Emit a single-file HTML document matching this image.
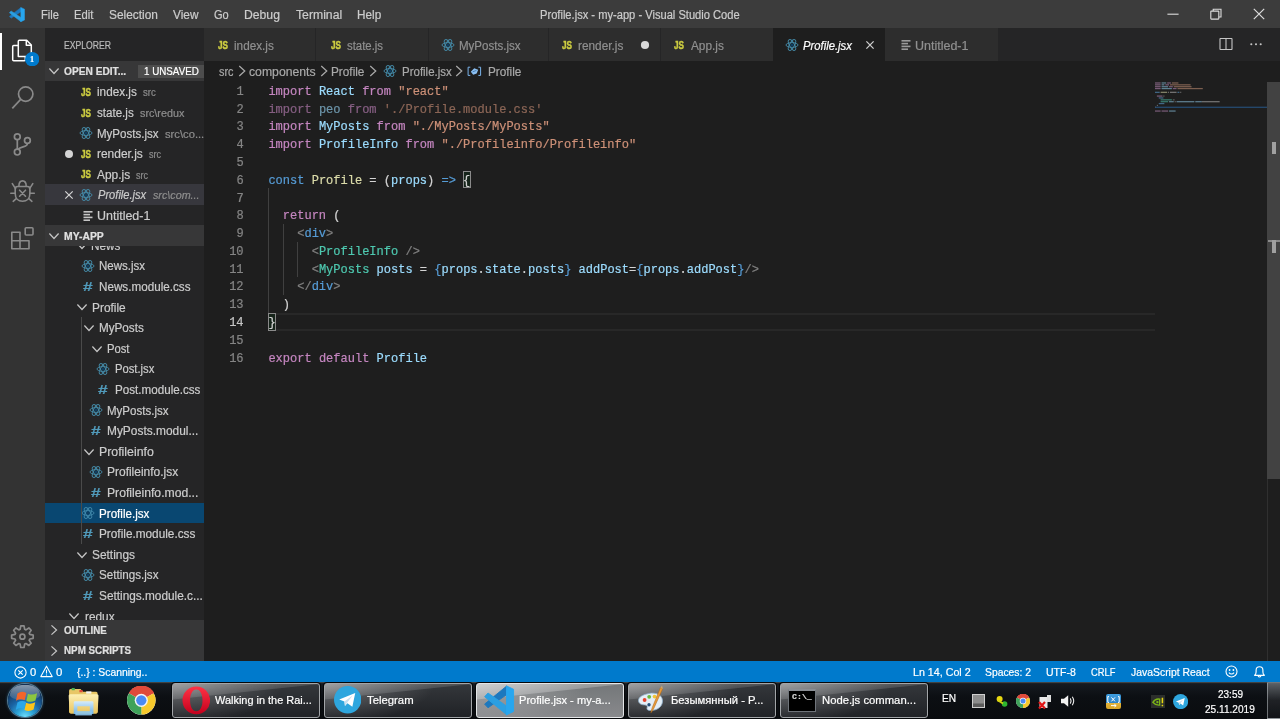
<!DOCTYPE html>
<html lang="en"><head><meta charset="utf-8"><title>Profile.jsx - my-app - Visual Studio Code</title>
<style>
*{box-sizing:border-box}
html,body{margin:0;padding:0;width:1280px;height:719px;overflow:hidden;background:#1e1e1e}
body{font-family:"Liberation Sans",sans-serif;font-size:12px;color:#ccc;position:relative;line-height:1}
#root{position:absolute;left:0;top:0;width:1280px;height:719px;overflow:hidden;will-change:transform}
.a{position:absolute;white-space:nowrap}
i.a{display:block}
.t{line-height:1;transform-origin:0 0;white-space:pre;-webkit-text-stroke:0.2px}
.mono{font-family:"Liberation Mono",monospace}
#task{left:0;top:681.6px;width:1280px;height:37.4px;background:linear-gradient(180deg,#4a4a4a 0,#3a3a3a 1px,#161a20 1.6px,#0c0f13 40%,#0a0c0f 100%)}
.ln,.cl{font-size:12.03px}
.cl{-webkit-text-stroke:0.2px}
.ln{-webkit-text-stroke:0.2px}
.cl{color:#d4d4d4}
.dim{opacity:.62}
.k{color:#c586c0}.v{color:#9cdcfe}.s{color:#ce9178}.c{color:#569cd6}.f{color:#dcdcaa}.y{color:#4ec9b0}
.g{color:#808080}
.tb{top:682.5px;height:35px;border-radius:3px;border:1px solid #a2a5a8;box-shadow:0 0 0 1px #06080a;background:radial-gradient(ellipse 75% 120% at 0% 0%,rgba(255,255,255,.30),rgba(255,255,255,0) 100%),linear-gradient(174deg,rgba(255,255,255,.32) 0%,rgba(255,255,255,.13) 31%,rgba(255,255,255,0) 33%),linear-gradient(180deg,#34373b,#202226)}
.tb.act{border-color:#e4e6e8;background:radial-gradient(ellipse 75% 120% at 0% 0%,rgba(255,255,255,.30),rgba(255,255,255,0) 100%),linear-gradient(174deg,rgba(255,255,255,.5) 0%,rgba(255,255,255,.25) 31%,rgba(255,255,255,0) 33%),linear-gradient(180deg,#747779,#88898c)}
</style></head>
<body>
<div id="root">
<header id="titlebar">
<div class="a" style="left:0.00px;top:0.00px;width:1280.00px;height:28.10px;background:#3c3c3c"></div><svg class="a" style="left:9.0px;top:6.6px" width="16.2" height="15.2" viewBox="0 0 100 100" preserveAspectRatio="none"><path d="M2 62L13 74L74 31V3Z" fill="#1c78be" stroke="#1c78be" stroke-width="3" stroke-linejoin="round"/><path d="M2 38L13 26L74 69V97Z" fill="#2b9fe2" stroke="#2b9fe2" stroke-width="3" stroke-linejoin="round"/><path d="M73 3L96 14V86L73 97Z" fill="#27a6ef" stroke="#27a6ef" stroke-width="3" stroke-linejoin="round"/></svg><span class="a t" style="left:40.50px;top:9.00px;font-size:12.0px;transform:scaleX(0.9282);color:#cccccc">File</span><span class="a t" style="left:73.75px;top:9.00px;font-size:12.0px;transform:scaleX(0.9370);color:#cccccc">Edit</span><span class="a t" style="left:109.25px;top:9.00px;font-size:12.0px;transform:scaleX(0.9909);color:#cccccc">Selection</span><span class="a t" style="left:173.00px;top:9.00px;font-size:12.0px;transform:scaleX(0.9856);color:#cccccc">View</span><span class="a t" style="left:213.75px;top:9.00px;font-size:12.0px;transform:scaleX(0.9183);color:#cccccc">Go</span><span class="a t" style="left:244.25px;top:9.00px;font-size:12.0px;transform:scaleX(1.0162);color:#cccccc">Debug</span><span class="a t" style="left:295.75px;top:9.00px;font-size:12.0px;transform:scaleX(1.0184);color:#cccccc">Terminal</span><span class="a t" style="left:356.75px;top:9.00px;font-size:12.0px;transform:scaleX(0.9798);color:#cccccc">Help</span>
<span class="a t" style="left:540.00px;top:9.00px;font-size:12.0px;transform:scaleX(0.9279);color:#cccccc">Profile.jsx - my-app - Visual Studio Code</span>
<svg class="a" style="left:1167.2px;top:8px" width="12" height="12" viewBox="0 0 12 12" ><path d="M0.4 6.2h11.2" stroke="#dcdcdc" stroke-width="1.1"/></svg><svg class="a" style="left:1209.6px;top:8.4px" width="12" height="12" viewBox="0 0 12 12" ><g fill="none" stroke="#dcdcdc" stroke-width="1.1"><rect x="0.8" y="3.1" width="8" height="8" rx="0.5"/><path d="M3.2 3.1V1.2h7.800v7.800H8.800"/></g></svg><svg class="a" style="left:1252.7px;top:8.3px" width="12" height="12" viewBox="0 0 12 12" ><path d="M0.8 0.8l10.4 10.4M11.2 0.8L0.8 11.2" stroke="#dcdcdc" stroke-width="1.2" fill="none"/></svg>
</header>
<nav id="activitybar">
<div class="a" style="left:0.00px;top:28.10px;width:45.00px;height:632.90px;background:#333333"></div><div class="a" style="left:0.00px;top:32.60px;width:2.00px;height:37.50px;background:#ffffff"></div><svg class="a" style="left:10.2px;top:37.7px" width="24" height="26" viewBox="0 0 24 26" ><g fill="none" stroke="#fff" stroke-width="1.5" stroke-linejoin="round"><path d="M8.3 18.4V3.2q0-1 1-1h7.4l4.6 4.7v10.5q0 1-1 1z"/><path d="M16.3 2.4v4.9h4.8"/><path d="M8 7.4H3.7q-1 0-1 1v13.4q0 1 1 1h10.6q1 0 1-1v-3.2"/></g></svg><svg class="a" style="left:24.9px;top:51.6px" width="14.4" height="14.4" viewBox="0 0 14.4 14.4" ><circle cx="7.2" cy="7.2" r="7.2" fill="#007acc"/></svg><span class="a t" style="left:30.30px;top:55.00px;font-size:8.8px;transform:scaleX(0.9250);color:#ffffff;font-weight:bold;font-family:'Liberation Serif',serif">1</span><svg class="a" style="left:0px;top:80px" width="45" height="35" viewBox="0 80 45 35" ><g fill="none" stroke="#8a8a8a" stroke-width="1.7"><circle cx="25.7" cy="94.1" r="7.2"/><path d="M20.7 99.3L12.3 108.3"/></g></svg><svg class="a" style="left:0px;top:128px" width="45" height="32" viewBox="0 128 45 32" ><g fill="none" stroke="#8a8a8a" stroke-width="1.7"><circle cx="17.3" cy="136.8" r="2.9"/><circle cx="17.3" cy="152.1" r="2.9"/><circle cx="27.4" cy="140.5" r="2.9"/><path d="M17.3 139.7v9.5"/><path d="M27.4 143.4C27.4 147.6 20.5 146 18.3 149.3"/></g></svg><svg class="a" style="left:0px;top:175px" width="45" height="32" viewBox="0 175 45 32" ><g fill="none" stroke="#8a8a8a" stroke-width="1.6" stroke-linecap="round"><path d="M17.6 186.5h9.9c1.6 0 2.4 .9 2.4 2.400v4.600c0 4.800-3 7.800-7.350 7.800s-7.350-3-7.350-7.800v-4.600c0-1.500 .8-2.400 2.400-2.400z"/><path d="M18.9 186.3C18.9 182.6 20.4 180.9 22.55 180.9C24.7 180.9 26.2 182.6 26.2 186.3"/><path d="M15.5 188.6L12.3 183.600M29.600 188.600L32.800 183.600M15 193.300H10.800M30.100 193.300H34.300M16.200 198.700L13.200 201.300M28.900 198.700L31.900 201.300"/><path d="M19.600 190.200L25.500 196.200M25.500 190.200L19.600 196.200"/></g></svg><svg class="a" style="left:0px;top:222px" width="45" height="32" viewBox="0 222 45 32" ><g fill="none" stroke="#8a8a8a" stroke-width="1.6" stroke-linejoin="round"><path d="M11.800 232.200H20V240.800H29V248.800H11.800Z"/><path d="M20 240.800V248.800M11.800 240.800H20"/><rect x="25.200" y="227.800" width="7.800" height="7.200" rx="1"/></g></svg><svg class="a" style="left:0px;top:620px" width="45" height="34" viewBox="0 620 45 34" ><g fill="none" stroke="#8a8a8a" stroke-width="1.7" stroke-linejoin="round"><path d="M20.77 625.92 L24.03 625.92 L24.68 629.34 L25.99 629.89 L28.87 627.93 L31.17 630.23 L29.21 633.11 L29.76 634.42 L33.18 635.07 L33.18 638.33 L29.76 638.98 L29.21 640.29 L31.17 643.17 L28.87 645.47 L25.99 643.51 L24.68 644.06 L24.03 647.48 L20.77 647.48 L20.12 644.06 L18.81 643.51 L15.93 645.47 L13.63 643.17 L15.59 640.29 L15.04 638.98 L11.62 638.33 L11.62 635.07 L15.04 634.42 L15.59 633.11 L13.63 630.23 L15.93 627.93 L18.81 629.89 L20.12 629.34Z"/><circle cx="22.4" cy="636.7" r="2.5"/></g></svg>
</nav>
<aside id="sidebar">
<div class="a" style="left:45.00px;top:28.10px;width:159.30px;height:632.90px;background:#252526"></div><span class="a t" style="left:64.00px;top:41.00px;font-size:10.2px;transform:scaleX(0.8489);color:#bbbbbb">EXPLORER</span>
<svg class="a" style="left:74.5px;top:238.6px" width="14" height="14" viewBox="-7 -7 14 14" ><path d="M-4.6 -2.53 L0 2.53 L4.6 -2.53" fill="none" stroke="#c5c5c5" stroke-width="1.25"/></svg><span class="a t" style="left:91.40px;top:240.00px;font-size:12.0px;transform:scaleX(0.9798);color:#cccccc">News</span>
<svg class="a" style="left:81.3px;top:258.9px" width="14.0" height="14.0" viewBox="-7.0 -7.0 14.0 14.0" ><g fill="none" stroke="#4489a6" stroke-width="0.95"><ellipse cx="0" cy="0" rx="6.0" ry="2.40"/><ellipse cx="0" cy="0" rx="6.0" ry="2.40" transform="rotate(60)"/><ellipse cx="0" cy="0" rx="6.0" ry="2.40" transform="rotate(120)"/></g><circle cx="0" cy="0" r="1.62" fill="#0d3f63"/></svg><span class="a t" style="left:99.40px;top:260.00px;font-size:12.0px;transform:scaleX(0.9603);color:#cccccc">News.jsx</span>
<span class="a t" style="left:83.40px;top:281.00px;font-size:12.4px;transform:scaleX(1.4000);color:#519aba;font-weight:bold">#</span><span class="a t" style="left:99.40px;top:281.00px;font-size:12.0px;transform:scaleX(0.9731);color:#cccccc">News.module.css</span>
<svg class="a" style="left:74.5px;top:300.40000000000003px" width="14" height="14" viewBox="-7 -7 14 14" ><path d="M-4.6 -2.53 L0 2.53 L4.6 -2.53" fill="none" stroke="#c5c5c5" stroke-width="1.25"/></svg><span class="a t" style="left:92.10px;top:302.00px;font-size:12.0px;transform:scaleX(0.9901);color:#cccccc">Profile</span>
<svg class="a" style="left:81.9px;top:321.00000000000006px" width="14" height="14" viewBox="-7 -7 14 14" ><path d="M-4.6 -2.53 L0 2.53 L4.6 -2.53" fill="none" stroke="#c5c5c5" stroke-width="1.25"/></svg><span class="a t" style="left:99.40px;top:322.00px;font-size:12.0px;transform:scaleX(0.9737);color:#cccccc">MyPosts</span>
<svg class="a" style="left:89.5px;top:341.6px" width="14" height="14" viewBox="-7 -7 14 14" ><path d="M-4.6 -2.53 L0 2.53 L4.6 -2.53" fill="none" stroke="#c5c5c5" stroke-width="1.25"/></svg><span class="a t" style="left:107.00px;top:343.00px;font-size:12.0px;transform:scaleX(0.9361);color:#cccccc">Post</span>
<svg class="a" style="left:96.2px;top:361.9px" width="14.0" height="14.0" viewBox="-7.0 -7.0 14.0 14.0" ><g fill="none" stroke="#4489a6" stroke-width="0.95"><ellipse cx="0" cy="0" rx="6.0" ry="2.40"/><ellipse cx="0" cy="0" rx="6.0" ry="2.40" transform="rotate(60)"/><ellipse cx="0" cy="0" rx="6.0" ry="2.40" transform="rotate(120)"/></g><circle cx="0" cy="0" r="1.62" fill="#0d3f63"/></svg><span class="a t" style="left:114.50px;top:363.00px;font-size:12.0px;transform:scaleX(0.9355);color:#cccccc">Post.jsx</span>
<span class="a t" style="left:98.30px;top:384.00px;font-size:12.4px;transform:scaleX(1.4000);color:#519aba;font-weight:bold">#</span><span class="a t" style="left:114.50px;top:384.00px;font-size:12.0px;transform:scaleX(0.9700);color:#cccccc">Post.module.css</span>
<svg class="a" style="left:88.6px;top:403.1px" width="14.0" height="14.0" viewBox="-7.0 -7.0 14.0 14.0" ><g fill="none" stroke="#4489a6" stroke-width="0.95"><ellipse cx="0" cy="0" rx="6.0" ry="2.40"/><ellipse cx="0" cy="0" rx="6.0" ry="2.40" transform="rotate(60)"/><ellipse cx="0" cy="0" rx="6.0" ry="2.40" transform="rotate(120)"/></g><circle cx="0" cy="0" r="1.62" fill="#0d3f63"/></svg><span class="a t" style="left:107.00px;top:405.00px;font-size:12.0px;transform:scaleX(0.9608);color:#cccccc">MyPosts.jsx</span>
<span class="a t" style="left:90.80px;top:425.00px;font-size:12.4px;transform:scaleX(1.4000);color:#519aba;font-weight:bold">#</span><span class="a t" style="left:107.00px;top:425.00px;font-size:12.0px;transform:scaleX(0.9924);color:#cccccc">MyPosts.modul...</span>
<svg class="a" style="left:81.9px;top:444.6px" width="14" height="14" viewBox="-7 -7 14 14" ><path d="M-4.6 -2.53 L0 2.53 L4.6 -2.53" fill="none" stroke="#c5c5c5" stroke-width="1.25"/></svg><span class="a t" style="left:99.40px;top:446.00px;font-size:12.0px;transform:scaleX(1.0263);color:#cccccc">Profileinfo</span>
<svg class="a" style="left:88.6px;top:464.9px" width="14.0" height="14.0" viewBox="-7.0 -7.0 14.0 14.0" ><g fill="none" stroke="#4489a6" stroke-width="0.95"><ellipse cx="0" cy="0" rx="6.0" ry="2.40"/><ellipse cx="0" cy="0" rx="6.0" ry="2.40" transform="rotate(60)"/><ellipse cx="0" cy="0" rx="6.0" ry="2.40" transform="rotate(120)"/></g><circle cx="0" cy="0" r="1.62" fill="#0d3f63"/></svg><span class="a t" style="left:107.00px;top:466.00px;font-size:12.0px;transform:scaleX(0.9977);color:#cccccc">Profileinfo.jsx</span>
<span class="a t" style="left:90.80px;top:487.00px;font-size:12.4px;transform:scaleX(1.4000);color:#519aba;font-weight:bold">#</span><span class="a t" style="left:107.00px;top:487.00px;font-size:12.0px;transform:scaleX(1.0144);color:#cccccc">Profileinfo.mod...</span>
<div class="a" style="left:45.00px;top:502.50px;width:159.30px;height:20.50px;background:#094771"></div><svg class="a" style="left:81.4px;top:506.1px" width="14.0" height="14.0" viewBox="-7.0 -7.0 14.0 14.0" ><g fill="none" stroke="#3f86a8" stroke-width="0.95"><ellipse cx="0" cy="0" rx="6.0" ry="2.40"/><ellipse cx="0" cy="0" rx="6.0" ry="2.40" transform="rotate(60)"/><ellipse cx="0" cy="0" rx="6.0" ry="2.40" transform="rotate(120)"/></g><circle cx="0" cy="0" r="1.62" fill="#0d3f63"/></svg><span class="a t" style="left:99.40px;top:508.00px;font-size:12.0px;transform:scaleX(0.9690);color:#ffffff">Profile.jsx</span>
<span class="a t" style="left:83.40px;top:528.00px;font-size:12.4px;transform:scaleX(1.4000);color:#519aba;font-weight:bold">#</span><span class="a t" style="left:99.40px;top:528.00px;font-size:12.0px;transform:scaleX(0.9833);color:#cccccc">Profile.module.css</span>
<svg class="a" style="left:74.6px;top:547.5999999999999px" width="14" height="14" viewBox="-7 -7 14 14" ><path d="M-4.6 -2.53 L0 2.53 L4.6 -2.53" fill="none" stroke="#c5c5c5" stroke-width="1.25"/></svg><span class="a t" style="left:92.10px;top:549.00px;font-size:12.0px;transform:scaleX(0.9917);color:#cccccc">Settings</span>
<svg class="a" style="left:81.2px;top:567.9px" width="14.0" height="14.0" viewBox="-7.0 -7.0 14.0 14.0" ><g fill="none" stroke="#4489a6" stroke-width="0.95"><ellipse cx="0" cy="0" rx="6.0" ry="2.40"/><ellipse cx="0" cy="0" rx="6.0" ry="2.40" transform="rotate(60)"/><ellipse cx="0" cy="0" rx="6.0" ry="2.40" transform="rotate(120)"/></g><circle cx="0" cy="0" r="1.62" fill="#0d3f63"/></svg><span class="a t" style="left:99.40px;top:569.00px;font-size:12.0px;transform:scaleX(0.9697);color:#cccccc">Settings.jsx</span>
<span class="a t" style="left:83.40px;top:590.00px;font-size:12.4px;transform:scaleX(1.4000);color:#519aba;font-weight:bold">#</span><span class="a t" style="left:99.40px;top:590.00px;font-size:12.0px;transform:scaleX(0.9852);color:#cccccc">Settings.module.c...</span>
<svg class="a" style="left:67.1px;top:609.4px" width="14" height="14" viewBox="-7 -7 14 14" ><path d="M-4.6 -2.53 L0 2.53 L4.6 -2.53" fill="none" stroke="#c5c5c5" stroke-width="1.25"/></svg><span class="a t" style="left:84.50px;top:611.00px;font-size:12.0px;transform:scaleX(0.9861);color:#cccccc">redux</span>
<div class="a" style="left:80.70px;top:316.70px;width:1.00px;height:227.20px;background:#4a4a4a"></div><div class="a" style="left:45.00px;top:81.40px;width:159.30px;height:144.20px;background:#252526"></div><div class="a" style="left:45.00px;top:60.90px;width:159.30px;height:20.50px;background:#373738"></div><svg class="a" style="left:47.1px;top:64.3px" width="14" height="14" viewBox="-7 -7 14 14" ><path d="M-4.6 -2.53 L0 2.53 L4.6 -2.53" fill="none" stroke="#c5c5c5" stroke-width="1.25"/></svg><span class="a t" style="left:63.80px;top:67.00px;font-size:10.2px;transform:scaleX(0.9978);color:#e0e0e0;font-weight:bold">OPEN EDIT...</span><div class="a" style="left:138.20px;top:64.70px;width:65.40px;height:13.00px;background:#4d4d4d"></div><span class="a t" style="left:144.40px;top:67.00px;font-size:10.2px;transform:scaleX(0.9623);color:#ffffff">1 UNSAVED</span>
<span class="a t" style="left:81.10px;top:88.00px;font-size:10.0px;transform:scaleX(0.8200);color:#cbcb41;font-weight:bold;-webkit-text-stroke:0.45px">JS</span><span class="a t" style="left:97.40px;top:86.00px;font-size:12.0px;transform:scaleX(0.9782);color:#cccccc">index.js</span><span class="a t" style="left:142.80px;top:87.00px;font-size:10.7px;transform:scaleX(0.8992);color:#8e8e8e">src</span>
<span class="a t" style="left:81.10px;top:109.00px;font-size:10.0px;transform:scaleX(0.8200);color:#cbcb41;font-weight:bold;-webkit-text-stroke:0.45px">JS</span><span class="a t" style="left:97.40px;top:107.00px;font-size:12.0px;transform:scaleX(0.9654);color:#cccccc">state.js</span><span class="a t" style="left:139.90px;top:108.00px;font-size:10.7px;transform:scaleX(1.0088);color:#8e8e8e">src\redux</span>
<svg class="a" style="left:79.2px;top:126.1px" width="14.0" height="14.0" viewBox="-7.0 -7.0 14.0 14.0" ><g fill="none" stroke="#4489a6" stroke-width="0.95"><ellipse cx="0" cy="0" rx="6.0" ry="2.40"/><ellipse cx="0" cy="0" rx="6.0" ry="2.40" transform="rotate(60)"/><ellipse cx="0" cy="0" rx="6.0" ry="2.40" transform="rotate(120)"/></g><circle cx="0" cy="0" r="1.62" fill="#0d3f63"/></svg><span class="a t" style="left:97.40px;top:128.00px;font-size:12.0px;transform:scaleX(0.9608);color:#cccccc">MyPosts.jsx</span><span class="a t" style="left:164.50px;top:129.00px;font-size:10.7px;transform:scaleX(1.0482);color:#8e8e8e">src\co...</span>
<svg class="a" style="left:63.2px;top:148.00000000000003px" width="12" height="12" viewBox="-6 -6 12 12" ><circle cx="0" cy="0" r="4.0" fill="#d4d4d4"/></svg><span class="a t" style="left:81.10px;top:150.00px;font-size:10.0px;transform:scaleX(0.8200);color:#cbcb41;font-weight:bold;-webkit-text-stroke:0.45px">JS</span><span class="a t" style="left:97.40px;top:148.00px;font-size:12.0px;transform:scaleX(0.9951);color:#cccccc">render.js</span><span class="a t" style="left:149.20px;top:149.00px;font-size:10.7px;transform:scaleX(0.8522);color:#8e8e8e">src</span>
<span class="a t" style="left:81.10px;top:170.00px;font-size:10.0px;transform:scaleX(0.8200);color:#cbcb41;font-weight:bold;-webkit-text-stroke:0.45px">JS</span><span class="a t" style="left:97.40px;top:169.00px;font-size:12.0px;transform:scaleX(0.9925);color:#cccccc">App.js</span><span class="a t" style="left:136.20px;top:170.00px;font-size:10.7px;transform:scaleX(0.8455);color:#8e8e8e">src</span>
<div class="a" style="left:45.00px;top:184.40px;width:159.30px;height:20.50px;background:#37373d"></div><svg class="a" style="left:63.400000000000006px;top:189.20000000000002px" width="12" height="12" viewBox="-6 -6 12 12" ><path d="M-3.7 -3.7 L3.7 3.7 M3.7 -3.7 L-3.7 3.7" fill="none" stroke="#d4d4d4" stroke-width="1.2"/></svg><svg class="a" style="left:79.2px;top:187.9px" width="14.0" height="14.0" viewBox="-7.0 -7.0 14.0 14.0" ><g fill="none" stroke="#4489a6" stroke-width="0.95"><ellipse cx="0" cy="0" rx="6.0" ry="2.40"/><ellipse cx="0" cy="0" rx="6.0" ry="2.40" transform="rotate(60)"/><ellipse cx="0" cy="0" rx="6.0" ry="2.40" transform="rotate(120)"/></g><circle cx="0" cy="0" r="1.62" fill="#0d3f63"/></svg><span class="a t" style="left:97.70px;top:189.00px;font-size:12.0px;transform:scaleX(0.9262);color:#cccccc;font-style:italic">Profile.jsx</span><span class="a t" style="left:152.60px;top:190.00px;font-size:10.7px;transform:scaleX(1.0056);color:#8e8e8e;font-style:italic">src\com...</span>
<svg class="a" style="left:82.0px;top:209.5px" width="12" height="12" viewBox="-6 -6 12 12" ><g fill="#c5c5c5"><rect x="-4.5" y="-5" width="9" height="1.6"/><rect x="-4.5" y="-2.2" width="6.5" height="1.6"/><rect x="-4.5" y="0.6" width="9" height="1.6"/><rect x="-4.5" y="3.4" width="6.5" height="1.6"/></g></svg><span class="a t" style="left:97.40px;top:210.00px;font-size:12.0px;transform:scaleX(1.0390);color:#cccccc">Untitled-1</span>
<div class="a" style="left:45.00px;top:225.40px;width:159.30px;height:20.60px;background:#373738"></div><svg class="a" style="left:47.1px;top:228.8px" width="14" height="14" viewBox="-7 -7 14 14" ><path d="M-4.6 -2.53 L0 2.53 L4.6 -2.53" fill="none" stroke="#c5c5c5" stroke-width="1.25"/></svg><span class="a t" style="left:63.80px;top:232.00px;font-size:10.2px;transform:scaleX(1.0188);color:#e0e0e0;font-weight:bold">MY-APP</span>
<div class="a" style="left:45.00px;top:619.70px;width:159.30px;height:41.40px;background:#373738"></div><svg class="a" style="left:47.2px;top:623.2px" width="14" height="14" viewBox="-7 -7 14 14" ><path d="M-2.53 -4.6 L2.53 0 L-2.53 4.6" fill="none" stroke="#c5c5c5" stroke-width="1.25"/></svg><span class="a t" style="left:63.80px;top:626.00px;font-size:10.2px;transform:scaleX(0.9574);color:#e0e0e0;font-weight:bold">OUTLINE</span><svg class="a" style="left:47.2px;top:643.6px" width="14" height="14" viewBox="-7 -7 14 14" ><path d="M-2.53 -4.6 L2.53 0 L-2.53 4.6" fill="none" stroke="#c5c5c5" stroke-width="1.25"/></svg><span class="a t" style="left:63.80px;top:646.00px;font-size:10.2px;transform:scaleX(0.9638);color:#e0e0e0;font-weight:bold">NPM SCRIPTS</span>
</aside>
<main id="editor">
<div id="tabs">
<div class="a" style="left:204.30px;top:28.10px;width:1075.70px;height:32.80px;background:#252526"></div><div class="a" style="left:204.30px;top:28.10px;width:111.00px;height:32.80px;background:#2d2d2d"></div><span class="a t" style="left:217.80px;top:41.00px;font-size:10.0px;transform:scaleX(0.8200);color:#cbcb41;font-weight:bold;-webkit-text-stroke:0.45px">JS</span><span class="a t" style="left:234.30px;top:40.00px;font-size:12.0px;transform:scaleX(0.9782);color:#909090">index.js</span>
<div class="a" style="left:316.20px;top:28.10px;width:111.60px;height:32.80px;background:#2d2d2d"></div><span class="a t" style="left:330.70px;top:41.00px;font-size:10.0px;transform:scaleX(0.8200);color:#cbcb41;font-weight:bold;-webkit-text-stroke:0.45px">JS</span><span class="a t" style="left:346.80px;top:40.00px;font-size:12.0px;transform:scaleX(0.9470);color:#909090">state.js</span>
<div class="a" style="left:428.70px;top:28.10px;width:119.30px;height:32.80px;background:#2d2d2d"></div><svg class="a" style="left:441.0px;top:38.0px" width="14.0" height="14.0" viewBox="-7.0 -7.0 14.0 14.0" ><g fill="none" stroke="#4489a6" stroke-width="0.95"><ellipse cx="0" cy="0" rx="6.0" ry="2.40"/><ellipse cx="0" cy="0" rx="6.0" ry="2.40" transform="rotate(60)"/><ellipse cx="0" cy="0" rx="6.0" ry="2.40" transform="rotate(120)"/></g><circle cx="0" cy="0" r="1.62" fill="#0d3f63"/></svg><span class="a t" style="left:459.40px;top:40.00px;font-size:12.0px;transform:scaleX(0.9608);color:#909090">MyPosts.jsx</span>
<div class="a" style="left:548.90px;top:28.10px;width:110.80px;height:32.80px;background:#2d2d2d"></div><span class="a t" style="left:561.60px;top:41.00px;font-size:10.0px;transform:scaleX(0.8200);color:#cbcb41;font-weight:bold;-webkit-text-stroke:0.45px">JS</span><span class="a t" style="left:578.10px;top:40.00px;font-size:12.0px;transform:scaleX(0.9842);color:#909090">render.js</span><svg class="a" style="left:638.5px;top:39.0px" width="12" height="12" viewBox="-6 -6 12 12" ><circle cx="0" cy="0" r="4.1" fill="#d8d8d8"/></svg>
<div class="a" style="left:660.60px;top:28.10px;width:112.40px;height:32.80px;background:#2d2d2d"></div><span class="a t" style="left:674.10px;top:41.00px;font-size:10.0px;transform:scaleX(0.8200);color:#cbcb41;font-weight:bold;-webkit-text-stroke:0.45px">JS</span><span class="a t" style="left:690.60px;top:40.00px;font-size:12.0px;transform:scaleX(0.9835);color:#909090">App.js</span>
<div class="a" style="left:773.00px;top:28.10px;width:111.60px;height:32.80px;background:#1e1e1e"></div><svg class="a" style="left:784.9px;top:38.0px" width="14.0" height="14.0" viewBox="-7.0 -7.0 14.0 14.0" ><g fill="none" stroke="#4489a6" stroke-width="0.95"><ellipse cx="0" cy="0" rx="6.0" ry="2.40"/><ellipse cx="0" cy="0" rx="6.0" ry="2.40" transform="rotate(60)"/><ellipse cx="0" cy="0" rx="6.0" ry="2.40" transform="rotate(120)"/></g><circle cx="0" cy="0" r="1.62" fill="#0d3f63"/></svg><span class="a t" style="left:803.10px;top:40.00px;font-size:12.0px;transform:scaleX(0.9375);color:#ffffff;font-style:italic">Profile.jsx</span><svg class="a" style="left:863.5px;top:39.0px" width="12" height="12" viewBox="-6 -6 12 12" ><path d="M-3.6 -3.6 L3.6 3.6 M3.6 -3.6 L-3.6 3.6" fill="none" stroke="#d0d0d0" stroke-width="1.25"/></svg>
<div class="a" style="left:885.40px;top:28.10px;width:112.40px;height:32.80px;background:#2d2d2d"></div><svg class="a" style="left:900.0px;top:39.0px" width="12" height="12" viewBox="-6 -6 12 12" ><g fill="#9a9a9a"><rect x="-4.5" y="-5" width="9" height="1.6"/><rect x="-4.5" y="-2.2" width="6.5" height="1.6"/><rect x="-4.5" y="0.6" width="9" height="1.6"/><rect x="-4.5" y="3.4" width="6.5" height="1.6"/></g></svg><span class="a t" style="left:915.30px;top:40.00px;font-size:12.0px;transform:scaleX(1.0409);color:#909090">Untitled-1</span>
<svg class="a" style="left:1219px;top:36.9px" width="14" height="14" viewBox="0 0 14 14" ><rect x="1" y="1.5" width="12" height="11" rx="0.4" fill="none" stroke="#c5c5c5" stroke-width="1.1"/><path d="M7 1.5v11" stroke="#c5c5c5" stroke-width="1.1"/></svg><svg class="a" style="left:1248.5px;top:41.5px" width="16" height="5" viewBox="0 0 16 5" ><g fill="#c5c5c5"><circle cx="2.3" cy="2.2" r="1.05"/><circle cx="7" cy="2.2" r="1.05"/><circle cx="11.7" cy="2.2" r="1.05"/></g></svg>
</div>
<div id="breadcrumbs">
<span class="a t" style="left:219.30px;top:66.00px;font-size:12.0px;transform:scaleX(0.9033);color:#a9a9a9">src</span><span class="a t" style="left:249.30px;top:66.00px;font-size:12.0px;transform:scaleX(1.0188);color:#a9a9a9">components</span><span class="a t" style="left:331.25px;top:66.00px;font-size:12.0px;transform:scaleX(0.9828);color:#a9a9a9">Profile</span><span class="a t" style="left:402.10px;top:66.00px;font-size:12.0px;transform:scaleX(0.9574);color:#a9a9a9">Profile.jsx</span><span class="a t" style="left:487.90px;top:66.00px;font-size:12.0px;transform:scaleX(0.9814);color:#a9a9a9">Profile</span><svg class="a" style="left:234.7px;top:64.4px" width="14" height="14" viewBox="-7 -7 14 14" ><path d="M-2.75 -5.0 L2.75 0 L-2.75 5.0" fill="none" stroke="#a9a9a9" stroke-width="1.25"/></svg><svg class="a" style="left:316.8px;top:64.4px" width="14" height="14" viewBox="-7 -7 14 14" ><path d="M-2.75 -5.0 L2.75 0 L-2.75 5.0" fill="none" stroke="#a9a9a9" stroke-width="1.25"/></svg><svg class="a" style="left:366.0px;top:64.4px" width="14" height="14" viewBox="-7 -7 14 14" ><path d="M-2.75 -5.0 L2.75 0 L-2.75 5.0" fill="none" stroke="#a9a9a9" stroke-width="1.25"/></svg><svg class="a" style="left:452.3px;top:64.4px" width="14" height="14" viewBox="-7 -7 14 14" ><path d="M-2.75 -5.0 L2.75 0 L-2.75 5.0" fill="none" stroke="#a9a9a9" stroke-width="1.25"/></svg><svg class="a" style="left:383.3px;top:64.2px" width="14.0" height="14.0" viewBox="-7.0 -7.0 14.0 14.0" ><g fill="none" stroke="#4489a6" stroke-width="0.95"><ellipse cx="0" cy="0" rx="6.0" ry="2.40"/><ellipse cx="0" cy="0" rx="6.0" ry="2.40" transform="rotate(60)"/><ellipse cx="0" cy="0" rx="6.0" ry="2.40" transform="rotate(120)"/></g><circle cx="0" cy="0" r="1.62" fill="#0d3f63"/></svg><svg class="a" style="left:464px;top:64px" width="20" height="14" viewBox="464 64 20 14" ><g fill="none" stroke="#7ab3ea" stroke-width="1"><path d="M470.3 67.2H468.1V75.4H470.3"/><path d="M478.400 67.2H480.600V75.400H478.400"/></g><path d="M470.800 71.800L474.200 68.200L478.200 69.800L476.700 73.600L473.200 74.700Z" fill="#8cc0f2"/><path d="M472.600 71.900L476.400 70.400" stroke="#2f6496" stroke-width=".7"/></svg>
</div>
<div id="code" class="mono">
<div class="a" style="left:268.40px;top:313.00px;width:886.60px;height:2.00px;background:#282828"></div><div class="a" style="left:268.40px;top:329.00px;width:886.60px;height:2.00px;background:#282828"></div><div class="a" style="left:462.90px;top:170.50px;width:7.8px;height:17.3px;border:1px solid #8a8a8a;background:#16241a"></div><div class="a" style="left:268.10px;top:313.30px;width:7.8px;height:17.3px;border:1px solid #8a8a8a;background:#16241a"></div>
<div class="a" style="left:268.10px;top:188.24px;width:1.00px;height:124.53px;background:#404040"></div><div class="a" style="left:282.53px;top:223.82px;width:1.00px;height:71.16px;background:#404040"></div><div class="a" style="left:296.96px;top:241.61px;width:1.00px;height:35.58px;background:#404040"></div>
<span class="a t mono ln" style="left:236.38px;top:86.00px;color:#858585">1</span><span class="a t mono cl" style="left:268.4px;top:86.00px"><span class="k">import</span> <span class="v">React</span> <span class="k">from</span> <span class="s">"react"</span></span>
<span class="a t mono ln" style="left:236.38px;top:104.00px;color:#858585">2</span><span class="a t mono cl" style="left:268.4px;top:104.00px"><span class="dim"><span class="k">import</span> <span class="v">peo</span> <span class="k">from</span> <span class="s">'./Profile.module.css'</span></span></span>
<span class="a t mono ln" style="left:236.38px;top:121.00px;color:#858585">3</span><span class="a t mono cl" style="left:268.4px;top:121.00px"><span class="k">import</span> <span class="v">MyPosts</span> <span class="k">from</span> <span class="s">"./MyPosts/MyPosts"</span></span>
<span class="a t mono ln" style="left:236.38px;top:139.00px;color:#858585">4</span><span class="a t mono cl" style="left:268.4px;top:139.00px"><span class="k">import</span> <span class="v">ProfileInfo</span> <span class="k">from</span> <span class="s">"./Profileinfo/Profileinfo"</span></span>
<span class="a t mono ln" style="left:236.38px;top:157.00px;color:#858585">5</span>
<span class="a t mono ln" style="left:236.38px;top:175.00px;color:#858585">6</span><span class="a t mono cl" style="left:268.4px;top:175.00px"><span class="c">const</span> <span class="f">Profile</span> = (<span class="v">props</span>) <span class="c">=&gt;</span> {</span>
<span class="a t mono ln" style="left:236.38px;top:193.00px;color:#858585">7</span>
<span class="a t mono ln" style="left:236.38px;top:210.00px;color:#858585">8</span><span class="a t mono cl" style="left:268.4px;top:210.00px">  <span class="k">return</span> (</span>
<span class="a t mono ln" style="left:236.38px;top:228.00px;color:#858585">9</span><span class="a t mono cl" style="left:268.4px;top:228.00px">    <span class="g">&lt;</span><span class="c">div</span><span class="g">&gt;</span></span>
<span class="a t mono ln" style="left:229.17px;top:246.00px;color:#858585">10</span><span class="a t mono cl" style="left:268.4px;top:246.00px">      <span class="g">&lt;</span><span class="y">ProfileInfo</span> <span class="g">/&gt;</span></span>
<span class="a t mono ln" style="left:229.17px;top:264.00px;color:#858585">11</span><span class="a t mono cl" style="left:268.4px;top:264.00px">      <span class="g">&lt;</span><span class="y">MyPosts</span> <span class="v">posts</span> = <span class="c">{</span><span class="v">props</span>.<span class="v">state</span>.<span class="v">posts</span><span class="c">}</span> <span class="v">addPost</span>=<span class="c">{</span><span class="v">props</span>.<span class="v">addPost</span><span class="c">}</span><span class="g">/&gt;</span></span>
<span class="a t mono ln" style="left:229.17px;top:281.00px;color:#858585">12</span><span class="a t mono cl" style="left:268.4px;top:281.00px">    <span class="g">&lt;/</span><span class="c">div</span><span class="g">&gt;</span></span>
<span class="a t mono ln" style="left:229.17px;top:299.00px;color:#858585">13</span><span class="a t mono cl" style="left:268.4px;top:299.00px">  )</span>
<span class="a t mono ln" style="left:229.17px;top:317.00px;color:#c6c6c6">14</span><span class="a t mono cl" style="left:268.4px;top:317.00px">}</span>
<span class="a t mono ln" style="left:229.17px;top:335.00px;color:#858585">15</span>
<span class="a t mono ln" style="left:229.17px;top:353.00px;color:#858585">16</span><span class="a t mono cl" style="left:268.4px;top:353.00px"><span class="k">export</span> <span class="k">default</span> <span class="v">Profile</span></span>
</div>
<div id="minimap">
<svg class="a" style="left:1155px;top:81.5px" width="112.5" height="40" viewBox="0 0 112.5 40" ><g opacity=".8"><rect x="0.00" y="0.35" width="5.62" height="1.25" fill="#8e6a8c"/><rect x="6.56" y="0.35" width="4.69" height="1.25" fill="#6f98ae"/><rect x="12.18" y="0.35" width="3.75" height="1.25" fill="#8e6a8c"/><rect x="16.87" y="0.35" width="6.56" height="1.25" fill="#94705c"/><rect x="0.00" y="2.22" width="5.62" height="1.25" fill="#8e6a8c"/><rect x="6.56" y="2.22" width="2.81" height="1.25" fill="#6f98ae"/><rect x="10.31" y="2.22" width="3.75" height="1.25" fill="#8e6a8c"/><rect x="14.99" y="2.22" width="20.61" height="1.25" fill="#94705c"/><rect x="0.00" y="4.09" width="5.62" height="1.25" fill="#8e6a8c"/><rect x="6.56" y="4.09" width="6.56" height="1.25" fill="#6f98ae"/><rect x="14.06" y="4.09" width="3.75" height="1.25" fill="#8e6a8c"/><rect x="18.74" y="4.09" width="17.80" height="1.25" fill="#94705c"/><rect x="0.00" y="5.97" width="5.62" height="1.25" fill="#8e6a8c"/><rect x="6.56" y="5.97" width="10.31" height="1.25" fill="#6f98ae"/><rect x="17.80" y="5.97" width="3.75" height="1.25" fill="#8e6a8c"/><rect x="22.49" y="5.97" width="25.30" height="1.25" fill="#94705c"/><rect x="0.00" y="9.71" width="4.69" height="1.25" fill="#4a7aa0"/><rect x="5.62" y="9.71" width="6.56" height="1.25" fill="#9c9c7c"/><rect x="13.12" y="9.71" width="0.94" height="1.25" fill="#8a8a8a"/><rect x="14.99" y="9.71" width="6.56" height="1.25" fill="#8a8a8a"/><rect x="22.49" y="9.71" width="1.87" height="1.25" fill="#4a7aa0"/><rect x="25.30" y="9.71" width="0.94" height="1.25" fill="#8a8a8a"/><rect x="1.87" y="13.45" width="5.62" height="1.25" fill="#8e6a8c"/><rect x="8.43" y="13.45" width="0.94" height="1.25" fill="#8a8a8a"/><rect x="3.75" y="15.33" width="4.69" height="1.25" fill="#4a7aa0"/><rect x="5.62" y="17.20" width="11.24" height="1.25" fill="#3f8f80"/><rect x="17.80" y="17.20" width="1.87" height="1.25" fill="#666"/><rect x="5.62" y="19.07" width="7.50" height="1.25" fill="#3f8f80"/><rect x="14.06" y="19.07" width="4.69" height="1.25" fill="#6f98ae"/><rect x="19.68" y="19.07" width="0.94" height="1.25" fill="#8a8a8a"/><rect x="21.55" y="19.07" width="17.80" height="1.25" fill="#6f98ae"/><rect x="40.29" y="19.07" width="6.56" height="1.25" fill="#6f98ae"/><rect x="46.85" y="19.07" width="17.80" height="1.25" fill="#8a8a8a"/><rect x="3.75" y="20.94" width="5.62" height="1.25" fill="#4a7aa0"/><rect x="1.87" y="22.81" width="0.94" height="1.25" fill="#8a8a8a"/><rect x="0.00" y="24.69" width="0.94" height="1.25" fill="#8a8a8a"/><rect x="0.00" y="28.43" width="5.62" height="1.25" fill="#8e6a8c"/><rect x="6.56" y="28.43" width="6.56" height="1.25" fill="#8e6a8c"/><rect x="14.06" y="28.43" width="6.56" height="1.25" fill="#6f98ae"/></g><rect x="0" y="24.64" width="112.5" height="1.3" fill="#264f78" opacity=".9"/></svg>
<div class="a" style="left:1267.30px;top:81.50px;width:12.70px;height:579.50px;background:transparent;border-left:1px solid #303030"></div><div class="a" style="left:1267.30px;top:81.50px;width:12.70px;height:397.00px;background:#424242"></div><div class="a" style="left:1272.20px;top:142.00px;width:3.60px;height:12.00px;background:#a0a0a0"></div><div class="a" style="left:1267.80px;top:239.60px;width:12.20px;height:2.60px;background:#8a8a8a"></div><div class="a" style="left:1272.20px;top:240.00px;width:3.60px;height:12.50px;background:#a0a0a0"></div>
</div>
</main>
<footer id="statusbar">
<div class="a" style="left:0.00px;top:660.90px;width:1280.00px;height:21.00px;background:#007acc"></div><svg class="a" style="left:13.9px;top:665.5px" width="13" height="13" viewBox="0 0 13 13" ><g fill="none" stroke="#fff" stroke-width="1.1"><circle cx="6.5" cy="6.5" r="5.6"/><path d="M4.3 4.3l4.4 4.4M8.7 4.3l-4.4 4.4"/></g></svg><span class="a t" style="left:30.00px;top:667.00px;font-size:11.2px;transform:scaleX(1.0000);color:#fff">0</span><svg class="a" style="left:39.6px;top:665.3px" width="13" height="13" viewBox="0 0 13 13" ><g fill="none" stroke="#fff" stroke-width="1.1" stroke-linejoin="round"><path d="M6.5 1.2L12.2 11.6H0.8z"/><path d="M6.5 4.8v3.6M6.5 9.4v1.2"/></g></svg><span class="a t" style="left:55.70px;top:667.00px;font-size:11.2px;transform:scaleX(1.0167);color:#fff">0</span><span class="a t" style="left:77.00px;top:667.00px;font-size:11.2px;transform:scaleX(0.9264);color:#fff">{..} : Scanning..</span>
<span class="a t" style="left:912.50px;top:667.00px;font-size:11.2px;transform:scaleX(0.9550);color:#fff">Ln 14, Col 2</span><span class="a t" style="left:985.00px;top:667.00px;font-size:11.2px;transform:scaleX(0.9236);color:#fff">Spaces: 2</span><span class="a t" style="left:1046.25px;top:667.00px;font-size:11.2px;transform:scaleX(0.9373);color:#fff">UTF-8</span><span class="a t" style="left:1090.50px;top:667.00px;font-size:11.2px;transform:scaleX(0.8339);color:#fff">CRLF</span><span class="a t" style="left:1130.50px;top:667.00px;font-size:11.2px;transform:scaleX(0.9303);color:#fff">JavaScript React</span><svg class="a" style="left:1224.7px;top:665.4px" width="13" height="13" viewBox="0 0 13 13" ><g fill="none" stroke="#fff" stroke-width="1.1"><circle cx="6.5" cy="6.5" r="5.5"/><path d="M3.9 7.6q2.6 2.8 5.2 0"/></g><circle cx="4.6" cy="5" r=".9" fill="#fff"/><circle cx="8.4" cy="5" r=".9" fill="#fff"/></svg><svg class="a" style="left:1252.8px;top:665.0px" width="13" height="14" viewBox="0 0 13 14" ><g fill="none" stroke="#fff" stroke-width="1.15" stroke-linejoin="round"><path d="M1.6 10.3q1.5-1 1.5-3.200V5.200q0-3.400 3.400-3.400t3.400 3.400v1.900q0 2.200 1.500 3.200z"/><path d="M5 11.200q1.500 1.700 3 0"/></g></svg>
</footer>
<footer id="taskbar">
<div id="task" class="a"></div>
<div class="a" style="left:8px;top:684.4px;width:34.4px;height:33px;border-radius:50%;background:radial-gradient(circle at 50% 100%,#6fe0ff 0%,#2fa6d8 22%,#1a64a4 46%,#153f6c 70%,#10294a 100%);box-shadow:0 0 0 1px rgba(140,190,220,.5),0 0 3px 1px rgba(60,140,200,.45)"></div><div class="a" style="left:10.4px;top:685px;width:29.6px;height:15.4px;border-radius:15px 15px 50% 50%/13px 13px 6px 6px;background:linear-gradient(180deg,rgba(255,255,255,.5),rgba(255,255,255,.1))"></div><svg class="a" style="left:15.6px;top:689.2px" width="21.6" height="22.6" viewBox="0 0 18.4 17.4" preserveAspectRatio="none"><path d="M1.2 3.4q3.6-2.200 7.600-.4l-1.400 5.600q-3.600-1.600-7.400.4z" fill="#f2652a"/><path d="M10.200 3.600q3.600 1.600 7.800-.4l-1.400 5.600q-4 2-7.800.4z" fill="#8cc63f"/><path d="M1.200 10.400q3.600-2 7.400-.4l-1.400 5.600q-3.600-1.600-7.400.4z" fill="#2aa7e8"/><path d="M8.600 10.600q3.800 1.600 7.800-.4l-1.400 5.600q-4 2-7.800.4z" fill="#fcc419"/></svg>
<svg class="a" style="left:66.7px;top:684.7px" width="33.2" height="31.8" viewBox="0 0 32 28" preserveAspectRatio="none"><defs><linearGradient id="fg" x1="0" y1="0" x2="0" y2="1"><stop offset="0" stop-color="#fdf0b4"/><stop offset="1" stop-color="#e9c35c"/></linearGradient><linearGradient id="fb" x1="0" y1="0" x2="0" y2="1"><stop offset="0" stop-color="#d6ecfb"/><stop offset="1" stop-color="#6fb2e4"/></linearGradient></defs><path d="M2 5q0-1.500 1.500-1.500h9.500l2.500 2.500h12.500q1.500 0 1.500 1.500v16q0 1.500-1.500 1.500h-24.500q-1.500 0-1.500-1.500z" fill="#e8c766"/><rect x="4.500" y="2.600" width="3" height="2" fill="#4caf50"/><rect x="12" y="4.400" width="3" height="2" fill="#e04a3a"/><rect x="18.500" y="5.600" width="5" height="2" fill="#f5f5f5"/><path d="M1.600 9.500q0-1.400 1.400-1.400h26q1.400 0 1.400 1.400l-.8 14.100q-.1 1.400-1.500 1.400h-24.200q-1.400 0-1.500-1.400z" fill="url(#fg)"/><path d="M6.500 15.500q0-1.300 1.300-1.300h16.400q1.300 0 1.300 1.300v10h-3.500v-6.800h-12v6.800h-3.500z" fill="url(#fb)"/><rect x="8" y="23" width="16" height="3.800" fill="#8cc6ee" opacity=".9"/></svg><svg class="a" style="left:127.4px;top:686.3px" width="28.6" height="28.6" viewBox="-14.3 -14.3 28.6 28.6" ><circle cx="0" cy="0" r="14.3" fill="#fff"/><path d="M0 0 L-12.38 -7.15 A14.3 14.3 0 0 1 12.38 -7.15 Z" fill="#e04a3a"/><path d="M0 0 L12.38 -7.15 A14.3 14.3 0 0 1 0 14.3 Z" fill="#f7c92c"/><path d="M0 0 L0 14.3 A14.3 14.3 0 0 1 -12.38 -7.15 Z" fill="#3fa25a"/><path d="M0 -7.15 L12.87 -7.15 A14.3 14.3 0 0 0 -12.38 -7.15 Z" fill="#e04a3a"/><circle cx="0" cy="0" r="6.58" fill="#f4f4f4"/><circle cx="0" cy="0" r="5.15" fill="#4a8af4"/></svg>
<div class="a tb" style="left:172.2px;width:148.10px"></div><span class="a t" style="left:215.10px;top:695.00px;font-size:11.4px;transform:scaleX(0.9602);color:#ffffff">Walking in the Rai...</span>
<div class="a tb" style="left:324.0px;width:147.80px"></div><span class="a t" style="left:366.90px;top:695.00px;font-size:11.4px;transform:scaleX(0.9944);color:#ffffff">Telegram</span>
<div class="a tb act" style="left:476.0px;width:148.00px"></div><span class="a t" style="left:518.50px;top:695.00px;font-size:11.4px;transform:scaleX(0.9731);color:#ffffff">Profile.jsx - my-a...</span>
<div class="a tb" style="left:628.0px;width:147.60px"></div><span class="a t" style="left:670.50px;top:695.00px;font-size:11.4px;transform:scaleX(0.9853);color:#ffffff">Безымянный - P...</span>
<div class="a tb" style="left:780.0px;width:148.00px"></div><span class="a t" style="left:821.80px;top:695.00px;font-size:11.4px;transform:scaleX(0.9906);color:#ffffff">Node.js comman...</span>
<svg class="a" style="left:181.7px;top:685.9px" width="28.6" height="28.8" viewBox="0 0 29 29" preserveAspectRatio="none"><defs><linearGradient id="og" x1="0" y1="0" x2="0" y2="1"><stop offset="0" stop-color="#ff3345"/><stop offset="1" stop-color="#c4001d"/></linearGradient></defs><path d="M14.500 0.500a14 14 0 1 0 0 28a14 14 0 1 0 0-28zM14.500 3.600c3.900 0 6.300 4.800 6.300 10.900s-2.400 10.900-6.300 10.900s-6.300-4.800-6.300-10.900s2.400-10.900 6.300-10.900z" fill="url(#og)" fill-rule="evenodd"/></svg><svg class="a" style="left:333.9px;top:686.2px" width="27.4" height="27.4" viewBox="-13.7 -13.7 27.4 27.4" ><circle cx="0" cy="0" r="13.7" fill="#2ea6de"/><path d="M-8.49 -0.27 L7.54 -6.58 L4.66 7.12 L-0.27 3.56 L-2.74 6.30 L-3.29 1.92 Z" fill="#fff"/><path d="M-3.29 1.92 L4.93 -4.11 L-0.82 3.29 L-2.74 6.30 Z" fill="#c8dff0"/></svg><svg class="a" style="left:484.0px;top:685.0px" width="30.8" height="30.8" viewBox="0 0 100 100" ><path d="M2 62L13 74L74 31V3Z" fill="#1c78be" stroke="#1c78be" stroke-width="3" stroke-linejoin="round"/><path d="M2 38L13 26L74 69V97Z" fill="#2b9fe2" stroke="#2b9fe2" stroke-width="3" stroke-linejoin="round"/><path d="M73 3L96 14V86L73 97Z" fill="#27a6ef" stroke="#27a6ef" stroke-width="3" stroke-linejoin="round"/></svg><svg class="a" style="left:635.6px;top:685.3px" width="31" height="31" viewBox="0 0 31 31" ><path d="M13 8.500c7-1.500 13.500 1.500 13.500 7.500c0 5.500-5 9.500-12 9.500c-3 0-4-1.200-3.400-2.800c.6-1.700-.3-2.800-2.400-2.800c-3.700 0-6.200-1.600-6.200-4.400c0-3.500 4.500-6 10.500-7z" fill="#e4eef6" stroke="#8fb0cc" stroke-width=".8"/><circle cx="8.600" cy="15" r="1.900" fill="#e4442e"/><circle cx="13.200" cy="11.800" r="1.900" fill="#69b83c"/><circle cx="18.600" cy="11.600" r="1.900" fill="#f2c335"/><circle cx="13" cy="19.800" r="1.700" fill="#28507a"/><path d="M24.500 2.500l2.200 1.200l-8.800 19.500q-1.400 3-3 4.600q.2-2.400 1.400-5.400z" fill="#e89a3a" stroke="#a86414" stroke-width=".5"/><path d="M24.300 2.700l1.700-2.200l1 3.400z" fill="#caa36a"/></svg><div class="a" style="left:788.2px;top:688.6px;width:27.6px;height:23px;background:#000;border:1px solid #6f747a;border-top:2.4px solid #8a8e94"></div><span class="a t" style="left:791.60px;top:694.00px;font-size:7.4px;transform:scaleX(1.1144);color:#d8d8d8;font-weight:bold;font-family:'Liberation Mono',monospace">C:\_</span>
<span class="a t" style="left:942.20px;top:693.00px;font-size:10.8px;transform:scaleX(0.9365);color:#ffffff">EN</span>
<div class="a" style="left:971.8px;top:693.9px;width:13.7px;height:13.7px;background:#8d8d8d;border:1px solid #cfcfcf;box-shadow:inset 0 -3.500px 0 #5c5c5c"></div><svg class="a" style="left:994.5px;top:695px" width="14" height="14" viewBox="0 0 14 14" ><circle cx="4.600" cy="4" r="3" fill="#e8d811"/><circle cx="9.600" cy="9" r="2.800" fill="#2fb62f"/><path d="M3 5.500l5 3" stroke="#d0d010" stroke-width="2"/></svg><svg class="a" style="left:1016.3px;top:694.2px" width="14.0" height="14.0" viewBox="-7.0 -7.0 14.0 14.0" ><circle cx="0" cy="0" r="7.0" fill="#fff"/><path d="M0 0 L-6.06 -3.50 A7.0 7.0 0 0 1 6.06 -3.50 Z" fill="#e04a3a"/><path d="M0 0 L6.06 -3.50 A7.0 7.0 0 0 1 0 7.0 Z" fill="#f7c92c"/><path d="M0 0 L0 7.0 A7.0 7.0 0 0 1 -6.06 -3.50 Z" fill="#3fa25a"/><path d="M0 -3.50 L6.30 -3.50 A7.0 7.0 0 0 0 -6.06 -3.50 Z" fill="#e04a3a"/><circle cx="0" cy="0" r="3.22" fill="#f4f4f4"/><circle cx="0" cy="0" r="2.52" fill="#4a8af4"/></svg><svg class="a" style="left:1038.0px;top:693.8px" width="14" height="16" viewBox="0 0 14 16" ><rect x="1.500" y="3" width="8" height="11" fill="#e9e9e9"/><rect x="9" y="1" width="4" height="7" fill="#dedede"/><path d="M1 8l6 6.500M7 8l-6 6.500" stroke="#e01515" stroke-width="2.200"/></svg><svg class="a" style="left:1060.3px;top:694.2px" width="16" height="14" viewBox="0 0 16 14" ><path d="M1 4.800h3l4.200-3.600v11.600l-4.200-3.600h-3z" fill="#f2f2f2"/><path d="M10.300 4.400q1.600 2.600 0 5.200M12.300 2.800q2.800 4.200 0 8.400" fill="none" stroke="#e8e8e8" stroke-width="1.100"/></svg><div class="a" style="left:1105.8px;top:693.9px;width:15px;height:15px;border-radius:2px;background:linear-gradient(180deg,#3f9ee0 0%,#2c82c6 62%,#e2b23a 63%,#d9a426 100%)"></div><svg class="a" style="left:1105.8px;top:693.9px" width="15" height="15" viewBox="0 0 15 15" ><g fill="none" stroke="#fff" stroke-width="1"><path d="M3 2.600h-1.200v5.800h1.200M12 2.600h1.200v5.800h-1.200"/><path d="M5.400 3.400l3.600 4M9 3.400l-3.600 4"/><path d="M5 11.600h5M8.400 10.200l1.800 1.400l-1.800 1.400"/></g></svg><div class="a" style="left:1151.4px;top:694.6px;width:13.7px;height:13.700px;background:#2c2f2c"></div><svg class="a" style="left:1151.4px;top:694.6px" width="13.7" height="13.7" viewBox="0 0 15 15" ><path d="M2 8q3-4.500 7.500-3.500v6.500q-4.500.5-7.500-3z" fill="none" stroke="#7ab317" stroke-width="1.500"/><circle cx="7" cy="7.800" r="1.300" fill="#7ab317"/><path d="M12.500 3v6M12.500 10.600v1.800" stroke="#e6d811" stroke-width="1.700"/></svg><svg class="a" style="left:1173.1px;top:693.5px" width="15.2" height="15.2" viewBox="-7.6 -7.6 15.2 15.2" ><circle cx="0" cy="0" r="7.6" fill="#2ea6de"/><path d="M-4.71 -0.15 L4.18 -3.65 L2.58 3.95 L-0.15 1.98 L-1.52 3.50 L-1.82 1.06 Z" fill="#fff"/><path d="M-1.82 1.06 L2.74 -2.28 L-0.46 1.82 L-1.52 3.50 Z" fill="#c8dff0"/></svg>
<span class="a t" style="left:1218.20px;top:688.00px;font-size:11.6px;transform:scaleX(0.8612);color:#ffffff">23:59</span><span class="a t" style="left:1205.40px;top:703.00px;font-size:11.6px;transform:scaleX(0.8710);color:#ffffff">25.11.2019</span>
<div class="a" style="left:1267px;top:682.4px;width:13.5px;height:37px;border:1px solid rgba(200,205,210,.5);border-right:0;background:linear-gradient(180deg,rgba(140,145,150,.6),rgba(40,42,46,.7) 50%,rgba(20,22,26,.8))"></div>
</footer>
</div>
</body></html>
